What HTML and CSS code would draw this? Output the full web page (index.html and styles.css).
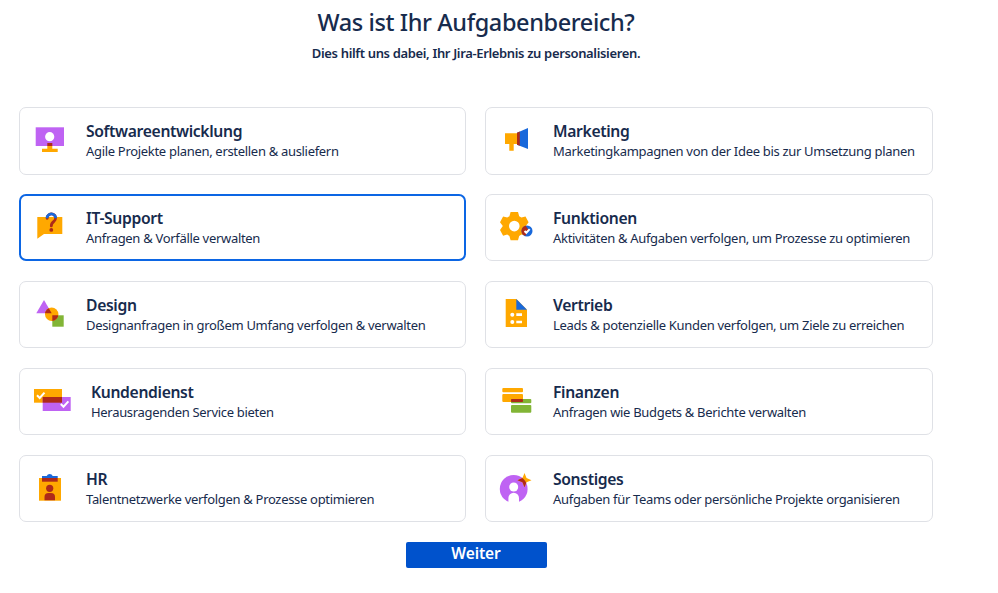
FILE: index.html
```
<!DOCTYPE html>
<html lang="de">
<head>
  <meta charset="UTF-8">
  <meta name="viewport" content="width=device-width, initial-scale=1.0">
  <title>Aufgabenbereich</title>
  <link rel="stylesheet" href="styles.css">
</head>
<body>
  <main class="page">
    <h1>Was ist Ihr Aufgabenbereich?</h1>
    <p class="intro">Dies hilft uns dabei, Ihr Jira-Erlebnis zu personalisieren.</p>

    <div class="cards">
      <div class="card">
        <svg class="icon" viewBox="0 0 52 66">
          <path class="purple" d="M15.7 19.3H44V38H15.7z"/>
          <circle class="white" cx="29.7" cy="28.7" r="4.6"/>
          <path class="orange" d="M27.3 37.5h5v3.3h5.4v3.2H22v-3.2h5.3z"/>
          <path class="red" d="M27.3 35h5v3h-5z"/>
        </svg>
        <div class="text">
          <h2>Softwareentwicklung</h2>
          <p>Agile Projekte planen, erstellen &amp; ausliefern</p>
        </div>
      </div>

      <div class="card">
        <svg class="icon" viewBox="0 0 52 66">
          <path class="orange" d="M19 25.3h13V36h-4.3v6.7h-4.4V36H19z"/>
          <path class="blue" d="M31 24.7L42 20v21l-11-4.3z"/>
          <path class="red" d="M31 24.7l2.8-1.2v14.2l-2.8-1z"/>
        </svg>
        <div class="text">
          <h2>Marketing</h2>
          <p>Marketingkampagnen von der Idee bis zur Umsetzung planen</p>
        </div>
      </div>

      <div class="card selected">
        <svg class="icon" viewBox="0 0 52 66">
          <path class="orange" d="M17.3 22h25v17H24l-6.7 4.7z"/>
          <path class="question" d="M27.2 23.3a4.2 4.2 0 1 1 6.6 3.2c-1.6 1.1-2.5 1.9-2.5 4.4"/>
          <path class="question top" d="M27 23.2a4.2 4.2 0 1 1 8.7 0"/>
          <circle class="red" cx="31.3" cy="34.9" r="1.9"/>
        </svg>
        <div class="text">
          <h2>IT-Support</h2>
          <p>Anfragen &amp; Vorfälle verwalten</p>
        </div>
      </div>

      <div class="card">
        <svg class="icon" viewBox="0 0 52 66">
          <defs>
            <path id="gear-shape" d="M24.6 17h7.4l1.2 4.3 2.2 1.3 4.1-1.2 3.1 5.8-2.8 3.9 2.8 3.9-3.1 5.8-4.1-1.2-2.2 1.3-1.2 4.3h-7.4l-1.2-4.3-2.2-1.3-4.1 1.2-3.1-5.8 2.8-3.9-2.8-3.9 3.1-5.8 4.1 1.2 2.2-1.3z"/>
            <clipPath id="gear"><use href="#gear-shape"/></clipPath>
          </defs>
          <use class="orange" href="#gear-shape"/>
          <circle class="white" cx="28.3" cy="31.1" r="5.3"/>
          <circle class="blue" cx="41" cy="36" r="5.5"/>
          <circle class="red" cx="41" cy="36" r="5.5" clip-path="url(#gear)"/>
          <path class="check" d="M38.5 36l1.8 1.8 3.4-3.7"/>
        </svg>
        <div class="text">
          <h2>Funktionen</h2>
          <p>Aktivitäten &amp; Aufgaben verfolgen, um Prozesse zu optimieren</p>
        </div>
      </div>

      <div class="card">
        <svg class="icon" viewBox="0 0 52 66">
          <defs>
            <clipPath id="disc"><circle cx="31.7" cy="32.3" r="6.7"/></clipPath>
          </defs>
          <path class="purple" d="M24 18l7.7 13.3H16.3z"/>
          <path class="green" d="M32.3 33.3h11.4v11.4H32.3z"/>
          <circle class="orange" cx="31.7" cy="32.3" r="6.7"/>
          <g class="red" clip-path="url(#disc)">
            <path d="M24 18l7.7 13.3H16.3z"/>
            <path d="M32.3 33.3h11.4v11.4H32.3z"/>
          </g>
        </svg>
        <div class="text">
          <h2>Design</h2>
          <p>Designanfragen in großem Umfang verfolgen &amp; verwalten</p>
        </div>
      </div>

      <div class="card">
        <svg class="icon" viewBox="0 0 52 66">
          <path class="orange" d="M19.7 17h10.6l10.7 10.7V45H19.7z"/>
          <path class="blue" d="M30.3 17L41 27.7H30.3z"/>
          <circle class="white" cx="26.3" cy="32.7" r="2"/>
          <circle class="white" cx="26.3" cy="40" r="2"/>
          <path class="white" d="M30.3 31.3H36V34h-5.7zM30.3 38.7H36v2.6h-5.7z"/>
        </svg>
        <div class="text">
          <h2>Vertrieb</h2>
          <p>Leads &amp; potenzielle Kunden verfolgen, um Ziele zu erreichen</p>
        </div>
      </div>

      <div class="card wide-icon">
        <svg class="icon" viewBox="0 0 52 66">
          <path class="orange" d="M14 20h28v13.7H14z"/>
          <path class="purple" d="M22.7 28h28v14h-28z"/>
          <path class="red" d="M22.7 28H42v5.7H22.7z"/>
          <path class="check" d="M17 26.3l2.7 2.7 4.8-5.4M40.8 35l2.7 2.7 4.9-5.4"/>
        </svg>
        <div class="text">
          <h2>Kundendienst</h2>
          <p>Herausragenden Service bieten</p>
        </div>
      </div>

      <div class="card">
        <svg class="icon" viewBox="0 0 52 66">
          <rect class="orange" x="16.3" y="19" width="20.7" height="4.3" rx="1"/>
          <rect class="orange" x="16.3" y="25" width="20.7" height="8" rx="1"/>
          <rect class="green" x="25" y="30" width="20.3" height="4.3" rx="1"/>
          <rect class="green" x="25" y="36" width="20.3" height="7.7" rx="1"/>
          <rect class="red" x="25" y="30" width="12" height="3" rx="0.8"/>
        </svg>
        <div class="text">
          <h2>Finanzen</h2>
          <p>Anfragen wie Budgets &amp; Berichte verwalten</p>
        </div>
      </div>

      <div class="card">
        <svg class="icon" viewBox="0 0 52 66">
          <path class="orange" d="M19 22h22v22.7H19z"/>
          <path class="blue" d="M22 22v-1.9h4.7a3.2 3.2 0 0 1 6 0h5V22z"/>
          <path class="red" d="M22 22h15.7v3.7H22z"/>
          <circle class="red" cx="29.7" cy="32.3" r="3.6"/>
          <path class="red" d="M24.5 44.3V41a4 4 0 0 1 4-4H31a4 4 0 0 1 4 4v3.3z"/>
        </svg>
        <div class="text">
          <h2>HR</h2>
          <p>Talentnetzwerke verfolgen &amp; Prozesse optimieren</p>
        </div>
      </div>

      <div class="card">
        <svg class="icon" viewBox="0 0 52 66">
          <defs>
            <clipPath id="avatar"><circle cx="27.7" cy="32.9" r="13.9"/></clipPath>
          </defs>
          <circle class="purple" cx="27.7" cy="32.9" r="13.9"/>
          <circle class="white" cx="27.7" cy="31" r="4.5"/>
          <path class="white" d="M22.4 47v-5A5.3 5.3 0 0 1 33 42v5z"/>
          <path class="orange" d="M38.5 17l2 5 5 2.2-5 2-2 5-2-5-5-2 5-2.200z"/>
          <path class="red" clip-path="url(#avatar)" d="M38.500 17l2 5 5 2.200-5 2-2 5-2-5-5-2 5-2.200z"/>
        </svg>
        <div class="text">
          <h2>Sonstiges</h2>
          <p>Aufgaben für Teams oder persönliche Projekte organisieren</p>
        </div>
      </div>
    </div>

    <button class="next">Weiter</button>
  </main>
</body>
</html>
```
FILE: styles.css
```
* {
  box-sizing: border-box;
}

body {
  margin: 0;
  background-color: #ffffff;
  color: #172b4d;
  font-family: "Noto Sans", "Open Sans", sans-serif;
}

h1, h2, p {
  margin: 0;
  white-space: nowrap;
}

.page {
  width: 914px;
  margin-left: 19px;
  padding-top: 5px;
  display: flex;
  flex-direction: column;
  align-items: center;
}

h1 {
  font-size: 23.5px;
  line-height: 34px;
  font-weight: 500;
  letter-spacing: -0.4px;
}

.intro {
  margin-top: 4px;
  font-size: 13px;
  line-height: 20px;
  font-weight: 600;
  letter-spacing: -0.35px;
}

/* Kartenraster */
.cards {
  width: 100%;
  margin-top: 44px;
  display: grid;
  grid-template-columns: 447px 448px;
  grid-auto-rows: 67.6px;
  gap: 19.3px 19px;
}

.card {
  display: flex;
  border: 1px solid #dfe1e6;
  border-radius: 7px;
}

.card.selected {
  border: 2px solid #0c66e4;
}

.selected .icon {
  margin: -1px 0 0 -1px;
}

.selected .text {
  margin-top: -1px;
}

.icon {
  flex: none;
  width: 52px;
  height: 66px;
}

.text {
  margin-left: 14px;
  padding-top: 13px;
}

.card:nth-child(even) .text {
  margin-left: 15px;
}

.wide-icon .text {
  margin-left: 19px;
}

h2 {
  font-size: 15.7px;
  line-height: 21px;
  font-weight: 600;
  letter-spacing: -0.35px;
}

.text p {
  font-size: 13px;
  line-height: 19px;
  letter-spacing: -0.31px;
}

/* Symbolfarben */
.orange { fill: #ffa800; }
.purple { fill: #bf63f3; }
.blue { fill: #1868db; }
.green { fill: #82b536; }
.red { fill: #ae2a19; }
.white { fill: #ffffff; }

.question {
  fill: none;
  stroke: #ae2a19;
  stroke-width: 2.8;
  stroke-linecap: round;
}

.question.top {
  stroke: #1868db;
  stroke-linecap: butt;
}

.check {
  fill: none;
  stroke: #ffffff;
  stroke-width: 2;
}

/* Weiter-Button */
.next {
  width: 141px;
  height: 26px;
  margin-top: 20px;
  padding: 0 0 4px;
  border: none;
  border-radius: 2px;
  background-color: #0052cc;
  color: #ffffff;
  font-family: inherit;
  font-size: 15.5px;
  line-height: 22px;
  font-weight: 600;
  letter-spacing: -0.1px;
  cursor: pointer;
}
```
